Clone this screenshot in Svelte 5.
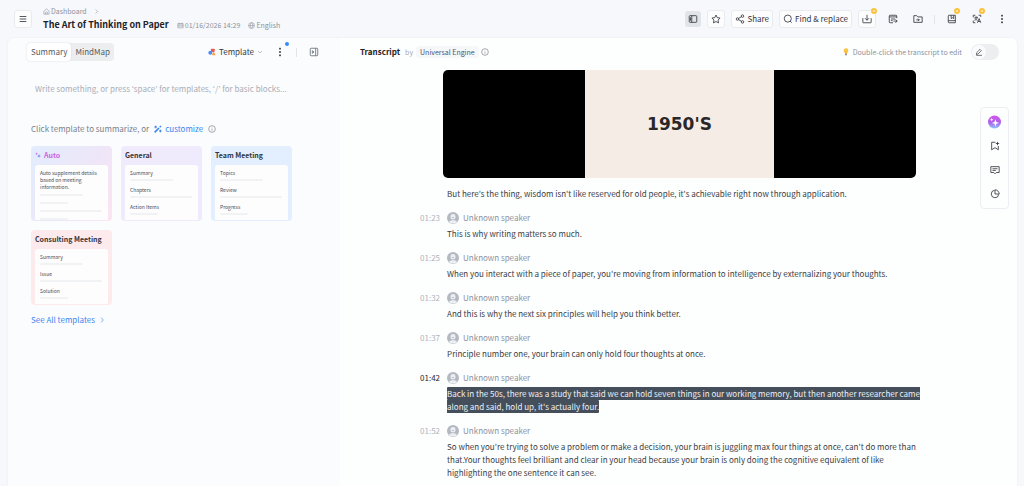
<script>
  const templates = [
    {
      name: 'Auto',
      tone: 'auto',
      intro: 'Auto supplement details based on meeting information.',
      bars: ['mid', 'short', 'long', 'short']
    },
    { name: 'General', tone: 'violet', sections: ['Summary', 'Chapters', 'Action Items'] },
    { name: 'Team Meeting', tone: 'blue', sections: ['Topics', 'Review', 'Progress'] },
    { name: 'Consulting Meeting', tone: 'pink', sections: ['Summary', 'Issue', 'Solution'] }
  ];
  const sectionBars = ['mid', 'long', 'short'];

  const entries = [
    { time: '01:23', text: 'This is why writing matters so much.' },
    {
      time: '01:25',
      text: "When you interact with a piece of paper, you're moving from information to intelligence by externalizing your thoughts."
    },
    { time: '01:32', text: 'And this is why the next six principles will help you think better.' },
    { time: '01:37', text: 'Principle number one, your brain can only hold four thoughts at once.' },
    {
      time: '01:42',
      text: "Back in the 50s, there was a study that said we can hold seven things in our working memory, but then another researcher came along and said, hold up, it's actually four."
    },
    {
      time: '01:52',
      text: "So when you're trying to solve a problem or make a decision, your brain is juggling max four things at once, can't do more than that.Your thoughts feel brilliant and clear in your head because your brain is only doing the cognitive equivalent of like highlighting the one sentence it can see."
    }
  ];

  let tab = $state('Summary');
  let current = $state('01:42');
  let editing = $state(false);
  let draft = $state('');

  const icons = {
    menu: 'M4 6h16M4 12h16M4 18h16',
    home: 'M3 11l9-8 9 8v10H3zM9 21v-5a3 3 0 0 1 6 0v5',
    chevron: 'M9 5l7 7-7 7',
    down: 'M4 8l8 8 8-8',
    calendar: 'M3 5h18v15H3zM3 10h18M3 14h18M8 3v4M16 3v4',
    globe: 'M12 2a10 10 0 1 0 0 20a10 10 0 1 0 0-20M2 12h20M12 2c-6 6-6 14 0 20M12 2c6 6 6 14 0 20',
    sidebar: 'M5 4h14a2 2 0 0 1 2 2v12a2 2 0 0 1-2 2H5a2 2 0 0 1-2-2V6a2 2 0 0 1 2-2zM9 4v16M6 8v8',
    star: 'M12 2.5l3 6.2 6.800 1-4.900 4.800 1.200 6.800-6.100-3.200-6.100 3.200 1.200-6.800L2.200 9.700l6.800-1z',
    share: 'M9 12a3 3 0 1 1-6 0a3 3 0 0 1 6 0zM21 5a3 3 0 1 1-6 0a3 3 0 0 1 6 0zM21 19a3 3 0 1 1-6 0a3 3 0 0 1 6 0zM8.500 10.500l7-4M8.500 13.500l7 4',
    search: 'M20 11a8.500 8.500 0 1 1-17 0a8.500 8.500 0 0 1 17 0zM17 17l4 4',
    download: 'M12 2v13M7 10l5 5 5-5M2 10v10a1 1 0 0 0 1 1h18a1 1 0 0 0 1-1V10',
    exportNote: 'M21 10V5a2 2 0 0 0-2-2H5a2 2 0 0 0-2 2v14a2 2 0 0 0 2 2h7M3 7h18M7 12h10M7 16h4M13 17h9M18 13l4 4-4 4',
    folder: 'M2 4h7l3 3h10v13H2zM8 14h7M12 11l3 3-3 3',
    book: 'M5 3h15v18H5a2 2 0 0 1-2-2V5a2 2 0 0 1 2-2zM3 16h17M10 3v8l3-2 3 2V3',
    translate: 'M3 8V3h5M16 3h5v4M3 16v5h5M6 8h8M10 6v2M13 8c-1 4-4 6-7 7M7 10c2 3 4 4 6 5M13 21l4-10 4 10M14.500 18h5',
    collapse: 'M5 3h14a2 2 0 0 1 2 2v14a2 2 0 0 1-2 2H5a2 2 0 0 1-2-2V5a2 2 0 0 1 2-2zM16 3v18M8 9l4 3-4 3z',
    info: 'M12 2a10 10 0 1 0 0 20a10 10 0 1 0 0-20M12 11v6M12 7v1',
    pencil: 'M4 20l1-6L15 4l4 4L9 18zM4 22h17',
    bookmark: 'M13 3H4v18l8-5 8 5v-9M18 2v8M14 6h8',
    comment: 'M2 4h20v14h-7l-3 3-3-3H2zM6 9h12M6 13h8',
    pie: 'M11 3a9 9 0 1 0 10 10M12 2v10h10A10 10 0 0 0 12 2z'
  };
</script>

{#snippet icon(name)}
  <svg class="icon {name}" viewBox="0 0 24 24" aria-hidden="true"><path d={icons[name]} /></svg>
{/snippet}

{#snippet dots()}
  <svg class="icon solid" viewBox="0 0 24 24" aria-hidden="true">
    <rect x="10" y="2" width="4" height="4" /><rect x="10" y="10" width="4" height="4" /><rect x="10" y="18" width="4" height="4" />
  </svg>
{/snippet}

<div class="app">
  <header class="topbar">
    <button class="btn square" aria-label="Menu">{@render icon('menu')}</button>
    <div class="heading">
      <nav class="crumbs" aria-label="Breadcrumb">
        <a href="#dashboard">{@render icon('home')}Dashboard</a>
        {@render icon('chevron')}
      </nav>
      <div class="title-row">
        <h1>The Art of Thinking on Paper</h1>
        <span class="meta">{@render icon('calendar')}01/16/2026 14:29</span>
        <span class="meta">{@render icon('globe')}English</span>
      </div>
    </div>
    <div class="toolbar">
      <button class="btn pressed" aria-label="Toggle sidebar">{@render icon('sidebar')}</button>
      <button class="btn square" aria-label="Favorite">{@render icon('star')}</button>
      <button class="btn">{@render icon('share')}Share</button>
      <button class="btn">{@render icon('search')}Find &amp; replace</button>
      <button class="btn square" aria-label="Download">{@render icon('download')}<i class="badge"></i></button>
      <div class="plain-group">
        <button class="plain" aria-label="Export note">{@render icon('exportNote')}</button>
        <button class="plain" aria-label="Move to folder">{@render icon('folder')}</button>
        <span class="divider"></span>
        <button class="plain" aria-label="Vocabulary">{@render icon('book')}<i class="badge"></i></button>
        <button class="plain" aria-label="Translate">{@render icon('translate')}<i class="badge"></i></button>
        <button class="plain" aria-label="More">{@render dots()}</button>
      </div>
    </div>
  </header>

  <main>
    <section class="notes">
      <div class="panel-head">
        <div class="tabs">
          {#each ['Summary', 'MindMap'] as name}
            <button class:active={tab === name} onclick={() => (tab = name)}>{name}</button>
          {/each}
        </div>
        <div class="panel-actions">
          <button class="template-btn">
            <svg class="icon shapes" viewBox="0 0 24 24" aria-hidden="true">
              <rect x="9" y="2" width="11" height="10" rx="2" fill="#e8584f" />
              <circle cx="7" cy="14" r="6" fill="#4b8df8" />
              <path d="M17 10l6 12H11z" fill="#f5a24b" />
            </svg>
            Template
            {@render icon('down')}
          </button>
          <button class="plain" aria-label="Summary options">{@render dots()}<i class="dot"></i></button>
          <span class="divider"></span>
          <button class="plain muted" aria-label="Collapse panel">{@render icon('collapse')}</button>
        </div>
      </div>

      <input
        class="editor"
        aria-label="Summary text"
        placeholder="Write something, or press ‘space’ for templates, ‘/’ for basic blocks..."
        bind:value={draft}
      />

      <p class="hint">
        Click template to summarize, or
        <a href="#customize">
          <svg class="icon wand" viewBox="0 0 24 24" aria-hidden="true">
            <path d="M2 22L15 9" stroke-width="5" />
            <path d="M17 7l4-4" stroke-width="4" />
            <path d="M5 2v8M1 6h8M19 14v8M15 18h8" stroke-width="3" />
          </svg>
          customize
        </a>
        {@render icon('info')}
      </p>

      <div class="cards">
        {#each templates as template}
          <button class="card {template.tone}">
            <span class="card-title">
              {#if template.tone === 'auto'}
                <svg class="icon sparkle" viewBox="0 0 24 24" aria-hidden="true">
                  <path d="M6 1l1.500 4.500L12 7 7.500 8.500 6 13 4.500 8.500 0 7l4.500-1.500z" fill="#d05fd8" />
                  <path d="M16 8l2 6 6 2-6 2-2 6-2-6-6-2 6-2z" fill="#6f7df2" />
                </svg>
              {/if}
              {template.name}
            </span>
            <span class="sheet">
              {#if template.intro}
                <span class="intro">{template.intro}</span>
                {#each template.bars as bar}
                  <span class="bar loose {bar}"></span>
                {/each}
              {:else}
                {#each template.sections as section, i}
                  <span class="label">{section}</span>
                  <span class="bar {sectionBars[i]}"></span>
                {/each}
              {/if}
            </span>
          </button>
        {/each}
      </div>

      <a class="see-all" href="#templates">See All templates {@render icon('chevron')}</a>
    </section>

    <section class="transcript">
      <div class="panel-head">
        <h2>Transcript</h2>
        <span class="by">by</span>
        <span class="engine">Universal Engine</span>
        {@render icon('info')}
        <span class="edit-hint">
          <svg class="icon bulb" viewBox="0 0 24 24" aria-hidden="true">
            <circle cx="12" cy="8" r="7" fill="#fcc344" />
            <path d="M9 13h6v5H9z" fill="#f5a833" /><path d="M9 18h6v4H9z" fill="#8b93a5" />
          </svg>
          Double-click the transcript to edit
        </span>
        <label class="switch">
          <input type="checkbox" aria-label="Edit transcript" bind:checked={editing} />
          <span class="knob">{@render icon('pencil')}</span>
        </label>
      </div>

      <div class="feed">
        <div class="video"><div class="frame">1950'S</div></div>
        <p class="text lead">But here's the thing, wisdom isn't like reserved for old people, it's achievable right now through application.</p>

        {#each entries as entry}
          <article class:current={entry.time === current}>
            <button class="time" onclick={() => (current = entry.time)}>{entry.time}</button>
            <div class="speaker">
              <svg class="avatar" viewBox="0 0 24 24" aria-hidden="true">
                <circle cx="12" cy="12" r="12" fill="#b4b8c2" />
                <rect x="7" y="4" width="10" height="11" rx="5" fill="#eceef2" />
                <path d="M4 20c1-5 15-5 16 0c-4 4-12 4-16 0z" fill="#eceef2" />
                <path d="M10 10c1 2 3 2 4 0" stroke="#b4b8c2" stroke-width="2" fill="none" />
              </svg>
              Unknown speaker
            </div>
            <p class="text">
              {#if entry.time === current}<mark>{entry.text}</mark>{:else}{entry.text}{/if}
            </p>
          </article>
        {/each}
      </div>

      <aside class="rail">
        <button class="plain" aria-label="Assistant">
          <svg class="orb" viewBox="0 0 28 28" aria-hidden="true">
            <defs>
              <linearGradient id="orb" x1="0" y1="0" x2="0" y2="1">
                <stop offset="0" stop-color="#d453e6" />
                <stop offset="0.550" stop-color="#ad62ee" />
                <stop offset="1" stop-color="#8cc8f7" />
              </linearGradient>
            </defs>
            <circle cx="14" cy="14" r="14" fill="url(#orb)" />
            <path d="M16 8l2 6 6 2-6 2-2 6-2-6-6-2 6-2zM8 5l1 3 3 1-3 1-1 3-1-3-3-1 3-1z" fill="#fff" />
          </svg>
        </button>
        <button class="plain" aria-label="Add bookmark">{@render icon('bookmark')}</button>
        <button class="plain" aria-label="Comments">{@render icon('comment')}</button>
        <button class="plain" aria-label="Statistics">{@render icon('pie')}</button>
      </aside>
    </section>
  </main>
</div>

<style>
  :global(body) {
    background: #f7f8fb;
  }

  .app {
    display: flex;
    flex-direction: column;
    height: 100vh;
    overflow: hidden;
    font-family: 'Noto Sans CJK KR', 'Noto Sans', sans-serif;
    font-size: 8px;
    line-height: 12px;
    color: #33363d;
  }

  h1,
  h2,
  p {
    margin: 0;
  }

  button,
  input {
    font: inherit;
    color: inherit;
    box-sizing: border-box;
  }

  button {
    display: flex;
    align-items: center;
    justify-content: center;
    padding: 0;
    border: none;
    background: none;
    cursor: pointer;
  }

  a {
    color: inherit;
    text-decoration: none;
  }

  .icon {
    flex: none;
    width: 10px;
    height: 10px;
    fill: none;
    stroke: currentColor;
    stroke-width: 2;
  }

  .solid {
    fill: currentColor;
    stroke: none;
  }

  .topbar {
    display: flex;
    align-items: center;
    flex: none;
    height: 38px;
    padding: 0 16px 0 14px;
  }

  .btn {
    position: relative;
    gap: 2px;
    height: 18px;
    padding: 0 3px;
    background: #fdfdfe;
    border: 1px solid #e9ebef;
    border-radius: 3px;
  }

  .btn.square {
    width: 18px;
    padding: 0;
  }

  .btn.pressed {
    width: 16px;
    height: 16px;
    padding: 0;
    background: #e1e4e8;
    border: none;
  }

  .heading {
    margin-left: 11px;
  }

  .crumbs,
  .crumbs a,
  .meta {
    display: flex;
    align-items: center;
    gap: 1px;
    color: #8d929c;
    font-size: 7px;
  }

  .crumbs {
    gap: 6px;
  }

  .crumbs .icon,
  .meta .icon {
    width: 7px;
    height: 7px;
  }

  .title-row {
    display: flex;
    align-items: center;
    gap: 8px;
    height: 16px;
  }

  h1 {
    font-size: 9px;
    font-weight: 600;
    color: #1f2228;
  }

  .toolbar,
  .plain-group,
  .panel-actions {
    display: flex;
    align-items: center;
  }

  .toolbar {
    gap: 6px;
    margin-left: auto;
  }

  .plain-group {
    gap: 12px;
    padding-left: 4px;
  }

  .plain {
    position: relative;
    width: 13px;
    height: 16px;
  }

  .muted {
    color: #686d77;
  }

  .divider {
    width: 1px;
    height: 9px;
    background: #e1e4e9;
  }

  .plain-group .divider {
    margin: 0 -2px;
  }

  .badge,
  .dot {
    position: absolute;
    top: -3px;
    right: -2px;
    box-sizing: border-box;
    width: 6px;
    height: 6px;
    background: #fff0c4;
    border: 2px solid #fbc23d;
    border-radius: 50%;
  }

  .dot {
    top: -2px;
    right: -3px;
    width: 4px;
    height: 4px;
    background: #3b8af5;
    border: none;
  }

  main {
    display: flex;
    flex: 1;
    min-height: 0;
    margin: 0 7px 0 8px;
    overflow: hidden;
    border-radius: 6px 6px 0 0;
    box-shadow: 0 0 3px #eceef2;
  }

  .notes {
    flex: 0 0 332px;
    box-sizing: border-box;
    padding: 0 20px 0 23px;
    background: #fbfcfe;
  }

  .transcript {
    position: relative;
    flex: 1;
    min-width: 0;
    padding: 0 18px 0 20px;
    background: #fdfefe;
  }

  .panel-head {
    display: flex;
    align-items: center;
    height: 28px;
  }

  .notes .panel-head {
    justify-content: space-between;
    margin-left: -4px;
  }

  .tabs {
    display: flex;
    height: 18px;
    background: #eceef0;
    border-radius: 4px;
  }

  .tabs button {
    padding: 0 4px;
    color: #555a63;
    border-radius: 4px;
  }

  .tabs .active {
    background: #fff;
    box-shadow: 0 0 2px #d5d8dd;
  }

  .panel-actions {
    gap: 10px;
  }

  .template-btn {
    gap: 3px;
  }

  .template-btn .down {
    width: 6px;
    height: 6px;
    color: #80858f;
  }

  .shapes {
    width: 8px;
    height: 8px;
    stroke: none;
  }

  .editor {
    display: block;
    width: 100%;
    height: 16px;
    margin-top: 14px;
    padding: 0 4px;
    background: none;
    border: none;
    outline: none;
  }

  .editor::placeholder {
    color: #a9adb6;
    opacity: 1;
  }

  .hint {
    display: flex;
    align-items: center;
    gap: 5px;
    margin-top: 27px;
    color: #7a7f89;
  }

  .hint a {
    display: flex;
    align-items: center;
    gap: 3px;
    color: #3b86ee;
  }

  .icon.info {
    width: 8px;
    height: 8px;
    color: #7a7f89;
  }

  .wand {
    width: 8px;
    height: 8px;
  }

  .cards {
    display: grid;
    grid-template-columns: repeat(auto-fill, 81px);
    gap: 9px;
    margin-top: 11px;
  }

  .card {
    flex-direction: column;
    align-items: stretch;
    justify-content: flex-start;
    height: 75px;
    padding: 3px 4px 1px;
    border-radius: 4px;
    text-align: left;
  }

  .auto {
    background: linear-gradient(120deg, #e2edfd, #eee6f8 60%, #fce4f0);
  }

  .violet {
    background: #f0eafd;
  }

  .blue {
    background: #e3effe;
  }

  .pink {
    background: #fdeaed;
  }

  .card-title {
    display: flex;
    align-items: center;
    gap: 3px;
    height: 12px;
    margin-bottom: 4px;
    font-weight: 600;
    font-size: 7px;
    white-space: nowrap;
  }

  .auto .card-title {
    color: #ce62dc;
  }

  .sparkle {
    width: 6px;
    height: 6px;
    stroke: none;
  }

  .sheet {
    display: flex;
    flex: 1;
    flex-direction: column;
    min-height: 0;
    padding: 4px 5px 0;
    overflow: hidden;
    background: #fdfdfe;
    border-radius: 3px 3px 0 0;
    font-size: 5px;
    line-height: 7px;
    color: #484c55;
  }

  .bar {
    flex: none;
    height: 2px;
    margin: 3px 0 5px;
    background: #f1f2f4;
    border-radius: 1px;
  }

  .bar.loose {
    margin: 4px 0 2px;
  }

  .mid {
    width: 43px;
  }

  .short {
    width: 28px;
  }

  .long {
    width: 62px;
  }

  .see-all {
    display: inline-flex;
    align-items: center;
    gap: 3px;
    margin-top: 9px;
    color: #3b86ee;
  }

  .see-all .icon {
    width: 8px;
    height: 8px;
  }

  h2 {
    font-size: 8px;
    font-weight: 600;
    color: #1f2228;
  }

  .by {
    margin: 0 3px 0 5px;
    color: #a6aab3;
    font-size: 7px;
  }

  .engine {
    margin-right: 2px;
    padding: 0 4px;
    background: #f6f7f9;
    border-radius: 3px;
    font-size: 7px;
    color: #4d5470;
  }

  .edit-hint {
    display: flex;
    align-items: center;
    gap: 3px;
    margin-left: auto;
    color: #8d929c;
    font-size: 7px;
  }

  .bulb {
    width: 8px;
    height: 8px;
    stroke: none;
  }

  .switch {
    display: flex;
    box-sizing: border-box;
    width: 28px;
    height: 16px;
    margin-left: 9px;
    padding: 1px;
    background: #eceef0;
    border-radius: 8px;
    cursor: pointer;
  }

  .switch input {
    position: absolute;
    opacity: 0;
  }

  .switch input:checked + .knob {
    margin-left: auto;
  }

  .knob {
    display: grid;
    place-items: center;
    width: 14px;
    height: 14px;
    background: #fafbfc;
    border-radius: 50%;
  }

  .knob .icon {
    width: 8px;
    height: 8px;
  }

  .feed {
    width: 74%;
    margin: 4px auto 0;
  }

  .video {
    display: flex;
    justify-content: center;
    aspect-ratio: 474 / 108;
    overflow: hidden;
    background: #000;
    border-radius: 5px;
  }

  .frame {
    display: grid;
    place-items: center;
    width: 40%;
    background: #f6ece6;
    color: #2a2728;
    font: 700 17px 'DejaVu Sans', sans-serif;
  }

  .text {
    font-size: 8px;
    line-height: 13px;
    color: #3a3d45;
  }

  .lead {
    padding: 9px 4px 11px;
  }

  article {
    display: grid;
    grid-template-columns: 27px 1fr;
    row-gap: 2px;
    margin: 0 -8px 11px -23px;
  }

  .time {
    justify-content: flex-start;
    height: 14px;
    color: #b0b4bd;
  }

  .current .time {
    color: #26292f;
  }

  .speaker {
    display: flex;
    align-items: center;
    gap: 4px;
    height: 14px;
    color: #8d929c;
  }

  .avatar {
    width: 12px;
    height: 12px;
  }

  article .text {
    grid-column: 2;
  }

  mark {
    padding: 1px 0;
    background: #454f5c;
    color: #eef0f3;
    border-radius: 1px;
  }

  .rail {
    position: absolute;
    top: 69px;
    right: 8px;
    display: flex;
    flex-direction: column;
    align-items: center;
    gap: 8px;
    padding: 6px 7px;
    background: #fdfefe;
    border: 1px solid #eceef1;
    border-radius: 4px;
  }

  .orb {
    width: 14px;
    height: 14px;
  }
</style>
